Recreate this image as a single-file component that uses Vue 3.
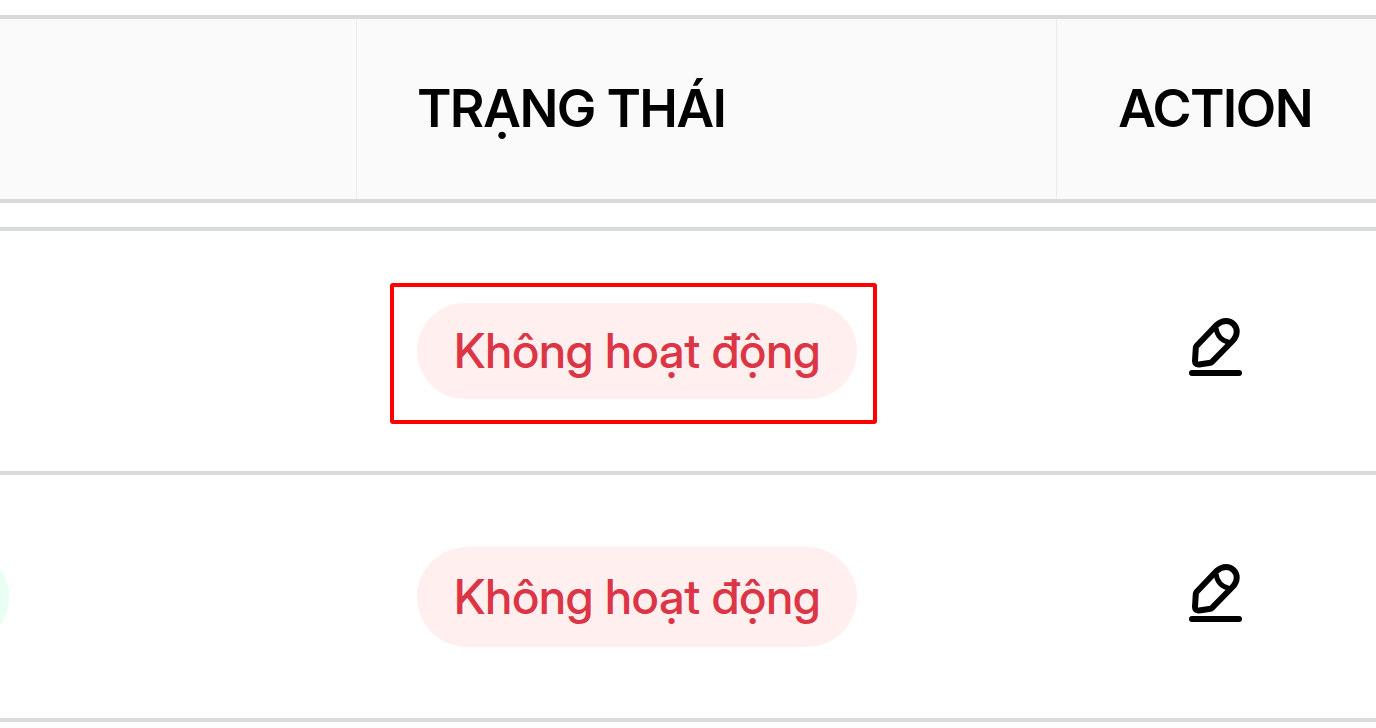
<script setup>
const rows = [
  { id: 1, status: 'Không hoạt động', marked: true, tall: false, active: false },
  { id: 2, status: 'Không hoạt động', marked: false, tall: true, active: true },
]
</script>

<template>
  <main class="page">
    <table class="grid">
      <colgroup>
        <col />
        <col class="col-status" />
        <col class="col-action" />
      </colgroup>
      <thead>
        <tr>
          <td class="head"></td>
          <th class="head" scope="col">TRẠNG THÁI</th>
          <th class="head center" scope="col">ACTION</th>
        </tr>
      </thead>
      <tbody>
        <tr class="spacer" aria-hidden="true">
          <td></td>
          <td></td>
          <td></td>
        </tr>
        <tr v-for="row in rows" :key="row.id" class="row" :class="{ tall: row.tall }">
          <td class="first"><span v-if="row.active" class="active-pill"></span></td>
          <td class="status">
            <span class="badge" :class="{ marked: row.marked }">{{ row.status }}</span>
          </td>
          <td class="center">
            <button class="edit" type="button" aria-label="Edit">
              <svg viewBox="0 0 54 60" fill="none" stroke="currentColor" stroke-width="6" stroke-linecap="round" stroke-linejoin="round" aria-hidden="true">
                <path d="M7.500 29 27.500 8 C31 5 34 4 37 4 C43 4 47.700 9 47.700 14.500 C47.700 18 46 21.500 43 24.500 L23 44.800 Q22 45.800 20 46 L10 47.500 C7.500 47.700 6 46.500 6 44 L6.800 31 Q6.900 29.800 7.500 29 Z" />
                <path d="M27 11 C28 18.500 32 23.500 40 25.500" stroke-width="5" />
                <path d="M3 56 H50" />
              </svg>
            </button>
          </td>
        </tr>
      </tbody>
    </table>
  </main>
</template>

<style>
body {
  background: #fff;
}
</style>

<style scoped>
.page {
  padding-top: 15px;
  overflow: hidden;
  font-family: "Inter Display", Inter, "Liberation Sans", sans-serif;
  font-variation-settings: "opsz" 32;
}

.grid {
  width: 100%;
  table-layout: fixed;
  border-collapse: separate;
  border-spacing: 0;
}

.col-status {
  width: 700px;
}

.col-action {
  width: 320px;
}

td,
th {
  box-sizing: border-box;
  padding: 0 0 0 61px;
  text-align: left;
  vertical-align: middle;
}

.head {
  height: 188px;
  background: #fafafa;
  border-top: 4px solid #d9d9d9;
  border-bottom: 4px solid #d9d9d9;
  color: #000;
  font-size: 52px;
  font-variation-settings: "opsz" 30;
  font-weight: 600;
  line-height: 64px;
}

th.head {
  padding-left: 62px;
  background: linear-gradient(#ececec, #ececec) 0 0 / 1px 100% no-repeat #fafafa;
}

.spacer td {
  height: 28px;
  border-bottom: 4px solid #d9dcde;
}

.row td {
  height: 244px;
  border-bottom: 4px solid #d9dbdd;
}

.row.tall td {
  height: 247px;
}

th.center {
  padding: 0;
  text-align: center;
}

.row .center {
  padding: 0 0 8px;
  text-align: center;
}

.row .first {
  padding: 0;
  overflow: hidden;
}

.active-pill {
  display: block;
  width: 240px;
  height: 100px;
  margin-left: -231px;
  border-radius: 50px;
  background: #e9fff4;
}

.badge {
  display: inline-block;
  position: relative;
  padding: 20px 36px 20px 37px;
  border-radius: 50px;
  background: #fff0ef;
  color: #dc3545;
  font-size: 48px;
  font-weight: 500;
  line-height: 56px;
  vertical-align: middle;
  white-space: nowrap;
}

.tall .badge {
  padding: 22px 36px 22px 37px;
}

.marked::after {
  content: "";
  position: absolute;
  inset: -20px -20px -25px -27px;
  border: 4px solid #f00;
  border-radius: 3px;
}

.edit {
  display: inline-block;
  padding: 0;
  border: 0;
  background: none;
  color: #000;
  cursor: pointer;
  vertical-align: middle;
}

.edit svg {
  display: block;
  width: 54px;
  height: 60px;
}
</style>
